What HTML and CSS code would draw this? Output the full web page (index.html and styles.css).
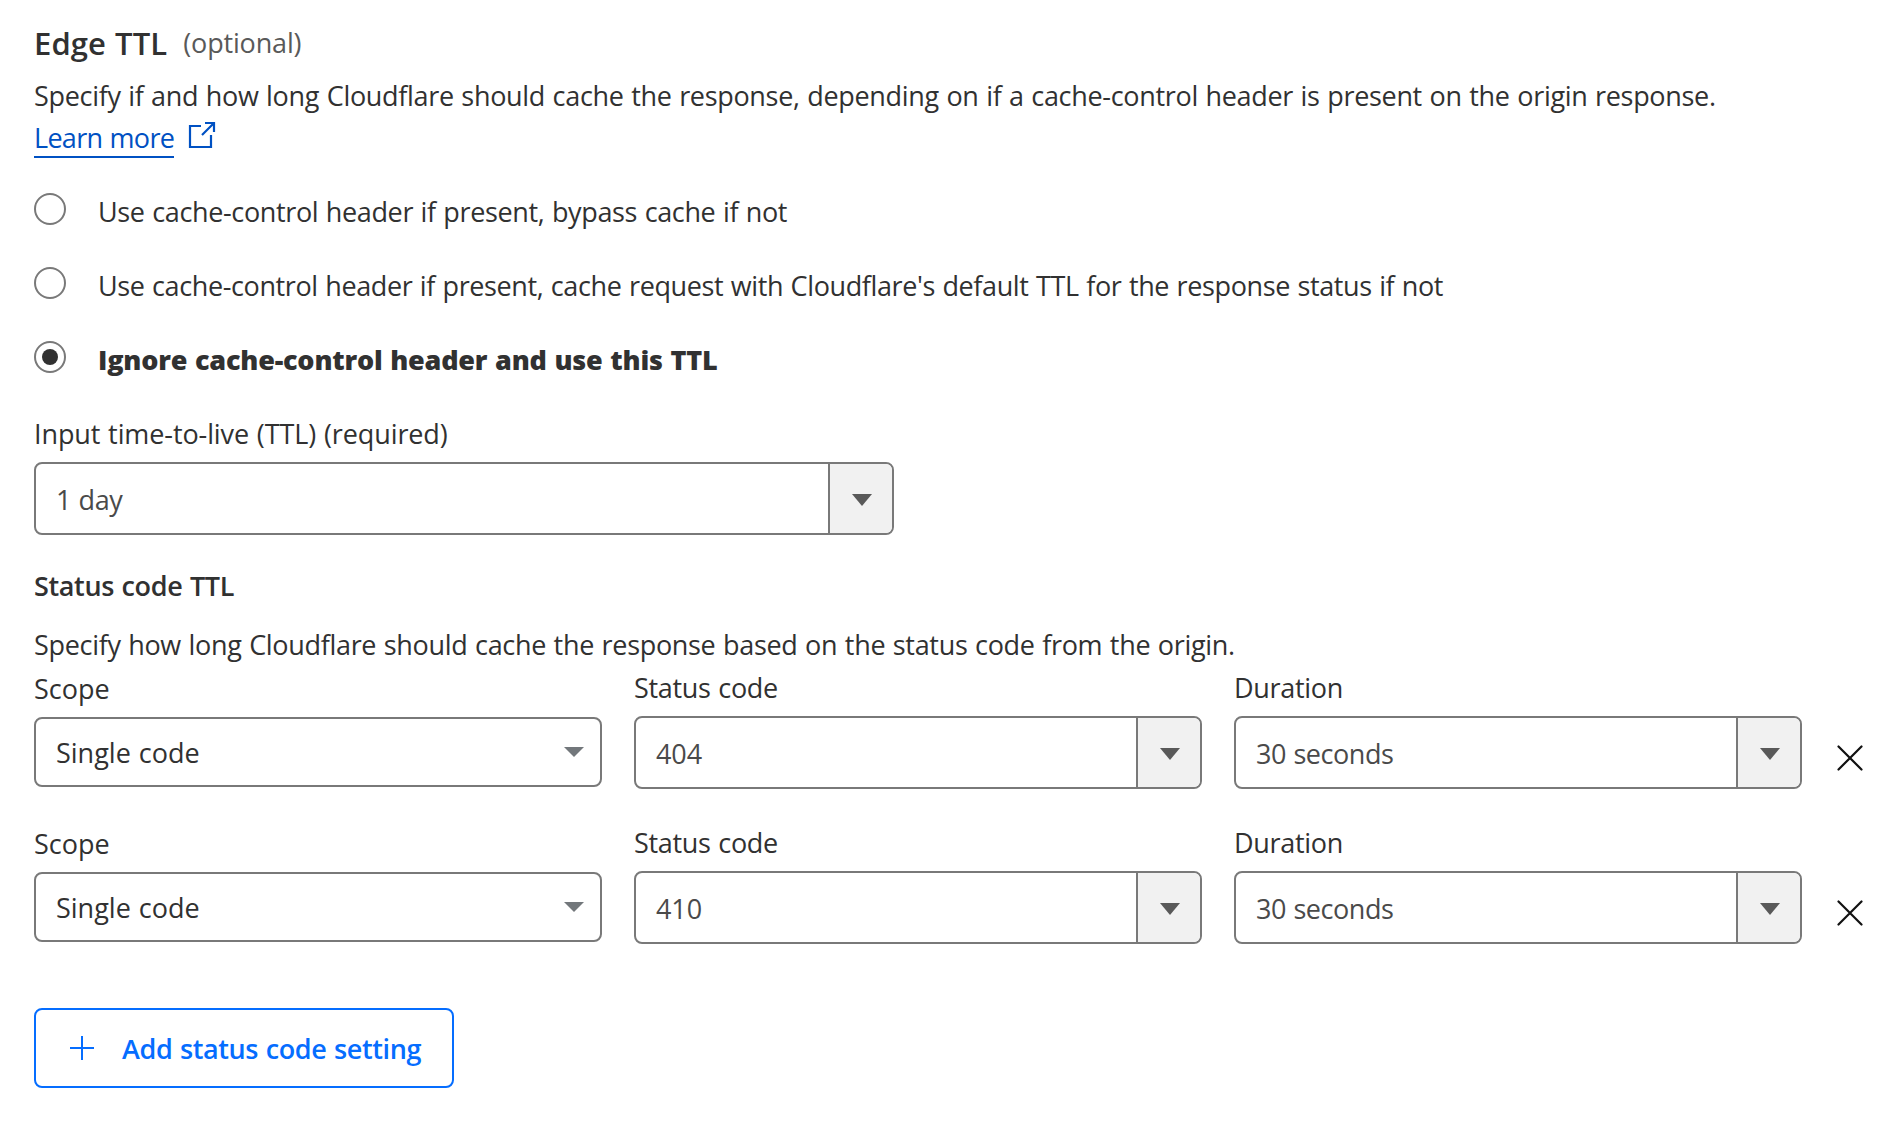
FILE: index.html
```html
<!DOCTYPE html>
<html lang="en">
<head>
<meta charset="utf-8">
<title>Edge TTL</title>
<link rel="stylesheet" href="styles.css">
</head>
<body>
<main class="panel">
  <header class="heading">
    <h2 class="title">Edge TTL</h2>
    <span class="optional">(optional)</span>
  </header>
  <div class="intro">
    <p class="text">Specify if and how long Cloudflare should cache the response, depending on if a cache-control header is present on the origin response.</p>
    <div class="more">
      <a class="link">Learn more</a>
      <svg class="external" width="29" height="28" viewBox="0 0 29 28"><path d="M14 5H3v21h21V14M18 2h9v9M27 2 15 14" fill="none" stroke="currentColor" stroke-width="2.2"/></svg>
    </div>
  </div>
  <div class="options">
    <label class="option"><span class="radio"></span><span class="option-a">Use cache-control header if present, bypass cache if not</span></label>
    <label class="option"><span class="radio"></span><span class="option-b">Use cache-control header if present, cache request with Cloudflare's default TTL for the response status if not</span></label>
    <label class="option selected"><span class="radio"></span><span>Ignore cache-control header and use this TTL</span></label>
  </div>
  <div class="field ttl">
    <div class="label label-ttl">Input time-to-live (TTL) (required)</div>
    <div class="combo"><span class="value value-day">1 day</span><span class="toggle"><svg width="20" height="12" viewBox="0 0 20 12"><path d="M0 0h20L10 12z"/></svg></span></div>
  </div>
  <h3 class="subtitle">Status code TTL</h3>
  <p class="text">Specify how long Cloudflare should cache the response based on the status code from the origin.</p>
  <div class="rules">
    <div class="rule">
      <div class="field scope">
        <div class="label label-scope">Scope</div>
        <div class="select"><span>Single code</span><svg width="20" height="10" viewBox="0 0 20 10"><path d="M0 0h20L10 10z"/></svg></div>
      </div>
      <div class="field">
        <div class="label">Status code</div>
        <div class="combo"><span class="value">404</span><span class="toggle"><svg width="20" height="12" viewBox="0 0 20 12"><path d="M0 0h20L10 12z"/></svg></span></div>
      </div>
      <div class="field">
        <div class="label">Duration</div>
        <div class="combo"><span class="value value-time">30 seconds</span><span class="toggle"><svg width="20" height="12" viewBox="0 0 20 12"><path d="M0 0h20L10 12z"/></svg></span></div>
      </div>
      <svg class="remove" width="26" height="26" viewBox="0 0 26 26"><path d="M1.500 1.500l23 23M24.500 1.500l-23 23"/></svg>
    </div>
    <div class="rule">
      <div class="field scope">
        <div class="label label-scope">Scope</div>
        <div class="select"><span>Single code</span><svg width="20" height="10" viewBox="0 0 20 10"><path d="M0 0h20L10 10z"/></svg></div>
      </div>
      <div class="field">
        <div class="label">Status code</div>
        <div class="combo"><span class="value">410</span><span class="toggle"><svg width="20" height="12" viewBox="0 0 20 12"><path d="M0 0h20L10 12z"/></svg></span></div>
      </div>
      <div class="field">
        <div class="label">Duration</div>
        <div class="combo"><span class="value value-time">30 seconds</span><span class="toggle"><svg width="20" height="12" viewBox="0 0 20 12"><path d="M0 0h20L10 12z"/></svg></span></div>
      </div>
      <svg class="remove" width="26" height="26" viewBox="0 0 26 26"><path d="M1.500 1.500l23 23M24.500 1.500l-23 23"/></svg>
    </div>
  </div>
  <button class="add"><svg width="24" height="24" viewBox="0 0 24 24"><path d="M12 0v24M0 12h24" stroke="currentColor" stroke-width="2"/></svg><span>Add status code setting</span></button>
</main>
</body>
</html>
```
FILE: styles.css
```css
* { box-sizing: border-box; }
body {
  margin: 0;
  background: #fff;
  color: #313131;
  font: 400 27px/42px "Open Sans", "Noto Sans", sans-serif;
  word-spacing: 0.9px;
}
h2, h3, p { margin: 0; }
svg { display: block; flex: none; }
.panel { padding: 22px 34px 0; }
.heading { display: flex; align-items: flex-start; gap: 16px; height: 42px; }
.title { font-size: 31px; line-height: 42px; font-weight: 600; letter-spacing: 0.1px; }
.optional { line-height: 42px; color: #595959; letter-spacing: -0.17px; }
.intro { margin-top: 11px; }
.text { letter-spacing: -0.32px; white-space: nowrap; }
.more { display: flex; gap: 13px; color: #0051c3; }
.link {
  height: 41px;
  border-bottom: 2px solid #0051c3;
  line-height: 41px;
  letter-spacing: -0.7px;
  width: 140px;
  white-space: nowrap;
}
.external { margin-top: 4px; }
.options { display: flex; flex-direction: column; gap: 32px; margin-top: 33px; }
.option { display: flex; gap: 32px; }
.option-a { letter-spacing: -0.36px; }
.option-b { letter-spacing: -0.39px; }
.radio {
  width: 32px;
  height: 32px;
  margin-top: 2px;
  border: 2px solid #797979;
  border-radius: 50%;
  display: grid;
  place-items: center;
}
.selected { font-weight: 800; letter-spacing: -0.2px; }
.selected .radio::after { content: ""; width: 16px; height: 16px; border-radius: 50%; background: #313131; }
.label { height: 49px; letter-spacing: -0.3px; }
.label-ttl { letter-spacing: -0.1px; }
.label-scope { letter-spacing: 0; }
.ttl { width: 860px; margin-top: 32px; }
.combo { display: flex; height: 73px; border: 2px solid #797979; border-radius: 8px; overflow: hidden; }
.value { flex: 1; padding: 1px 0 0 20px; line-height: 69px; color: #4a4a4a; letter-spacing: -0.1px; }
.value-day { letter-spacing: -0.4px; }
.value-time { letter-spacing: -0.45px; }
.toggle {
  width: 64px;
  padding: 3px 0 0 2px;
  border-left: 2px solid #797979;
  background: #f1f1f1;
  display: grid;
  place-items: center;
  fill: #595959;
}
.subtitle { margin-top: 30px; font-size: 27px; font-weight: 600; letter-spacing: -0.36px; }
.subtitle + .text { margin-top: 17px; }
.rules { display: flex; flex-direction: column; gap: 33px; margin-top: 1px; }
.rule { display: grid; grid-template-columns: repeat(3, 568px) 26px; gap: 32px; }
.scope { padding-top: 1px; }
.select {
  display: flex;
  align-items: center;
  justify-content: space-between;
  height: 70px;
  padding: 0 16px 0 20px;
  border: 2px solid #797979;
  border-radius: 8px;
  fill: #72777b;
}
.select span { padding-top: 2px; }
.remove { margin: 78px 0 0 3px; fill: none; stroke: #111; stroke-width: 2.2; stroke-linecap: round; }
.add {
  display: flex;
  align-items: center;
  gap: 28px;
  width: 420px;
  height: 80px;
  margin-top: 64px;
  padding: 0 0 0 34px;
  border: 2px solid #056dff;
  border-radius: 8px;
  background: #fff;
  color: #056dff;
  font: inherit;
  font-weight: 600;
  letter-spacing: -0.37px;
  word-spacing: 0.9px;
  white-space: nowrap;
}
.add span { padding-top: 2px; }
```
